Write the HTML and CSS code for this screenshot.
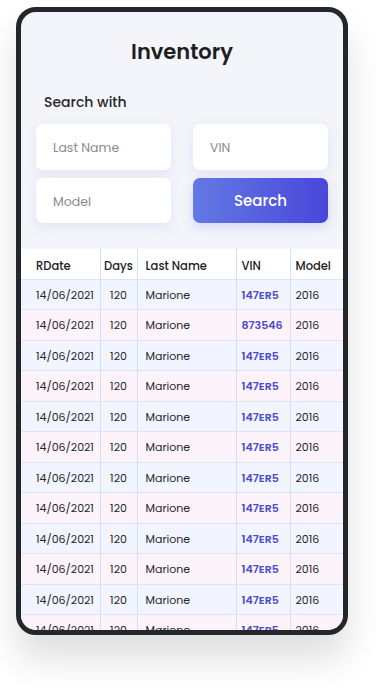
FILE: index.html
```html
<!DOCTYPE html>
<html lang="en">
<head>
<meta charset="UTF-8" />
<meta name="viewport" content="width=device-width, initial-scale=1" />
<title>Inventory</title>
<link rel="stylesheet" href="styles.css">
</head>
<body>

<div class="phone">
  <h1>Inventory</h1>

  <p class="search-label">Search with</p>

  <div class="search-grid">
    <input type="text" class="field" placeholder="Last Name" />
    <input type="text" class="field" placeholder="VIN" />
    <input type="text" class="field" placeholder="Model" />
    <button class="search-btn">Search</button>
  </div>

  <div class="table-wrap">
    <table class="inv-table">
      <colgroup>
        <col style="width:79px" />
        <col style="width:37px" />
        <col style="width:99px" />
        <col style="width:54px" />
        <col style="width:61px" />
      </colgroup>
      <thead>
        <tr>
          <th class="c-date">RDate</th>
          <th class="c-days">Days</th>
          <th class="c-name">Last Name</th>
          <th>VIN</th>
          <th>Model</th>
        </tr>
      </thead>
      <tbody id="rows"></tbody>
    </table>
  </div>
</div>

<script>
  const vins = ['147ER5', '873546', '147ER5', '147ER5', '147ER5', '147ER5', '147ER5',
                '147ER5', '147ER5', '147ER5', '147ER5', '147ER5'];

  const tbody = document.getElementById('rows');
  vins.forEach(vin => {
    const tr = document.createElement('tr');
    tr.innerHTML =
      '<td class="c-date">14/06/2021</td>' +
      '<td class="c-days">120</td>' +
      '<td class="c-name">Marione</td>' +
      '<td class="c-vin">' + vin + '</td>' +
      '<td>2016</td>';
    tbody.appendChild(tr);
  });
</script>

</body>
</html>
```

FILE: styles.css
```css
* {
  box-sizing: border-box;
}
body {
  margin: 0;
  width: 392px;
  height: 688px;
  overflow: hidden;
  background: #fff;
  font-family: Poppins, Inter, "Noto Sans", sans-serif;
  color: #222;
}
.phone {
  margin: 7px 0 0 16px;
  width: 332px;
  height: 628px;
  border: 5px solid #23262a;
  border-radius: 20px;
  background: #f4f5fa;
  overflow: hidden;
  box-shadow: 0 24px 36px rgba(0,0,0,0.13);
}
h1 {
  margin: 25px 0 0;
  text-align: center;
  font-size: 21px;
  line-height: 30px;
  font-weight: 600;
  color: #1d1e22;
}
.search-label {
  margin: 25px 0 0 23px;
  font-size: 14px;
  line-height: 20px;
  font-weight: 500;
  color: #26272b;
}
.search-grid {
  margin: 12px 15px 0;
  display: grid;
  grid-template-columns: 135px 135px;
  column-gap: 22px;
  row-gap: 8px;
}
.field {
  height: 46px;
  border: none;
  border-radius: 7px;
  background: #fff;
  padding: 2px 17px 0;
  font-family: inherit;
  font-size: 12.5px;
  color: #333;
  box-shadow: 0 4px 12px rgba(120,130,200,0.14);
  outline: none;
}
.field:nth-child(3) {
  height: 45px;
}
.field::placeholder {
  color: #8a8a90;
}
.search-btn {
  height: 45px;
  border: none;
  border-radius: 7px;
  background: linear-gradient(90deg, #6379e4, #4847d9);
  color: #fff;
  font-family: inherit;
  font-size: 15px;
  font-weight: 500;
  cursor: pointer;
  box-shadow: 0 4px 12px rgba(80,80,220,0.18);
}
.table-wrap {
  margin-top: 26px;
  overflow: hidden;
}
.inv-table {
  table-layout: fixed;
  width: 330px;
  border-collapse: collapse;
  font-size: 11px;
}
.inv-table th,
.inv-table td {
  padding: 2px 5px 0;
  text-align: left;
  white-space: nowrap;
  border-right: 1px solid #d3ddf4;
  border-bottom: 1px solid #dbe3f6;
}
.inv-table th {
  height: 30px;
  padding-top: 5px;
  background: #fff;
  font-size: 11.5px;
  font-weight: 500;
  color: #1f2024;
}
.inv-table td {
  height: 30.5px;
  color: #26272b;
}
.inv-table tbody tr:nth-child(odd) td {
  background: #f2f5ff;
}
.inv-table tbody tr:nth-child(even) td {
  background: #fdf3fb;
}
.inv-table .c-date {
  padding-left: 15px;
}
.inv-table .c-days {
  text-align: center;
  padding-left: 2px;
  padding-right: 2px;
}
.inv-table .c-name {
  padding-left: 8px;
}
.inv-table .c-vin {
  color: #4c4bc8;
  font-weight: 600;
}
```
